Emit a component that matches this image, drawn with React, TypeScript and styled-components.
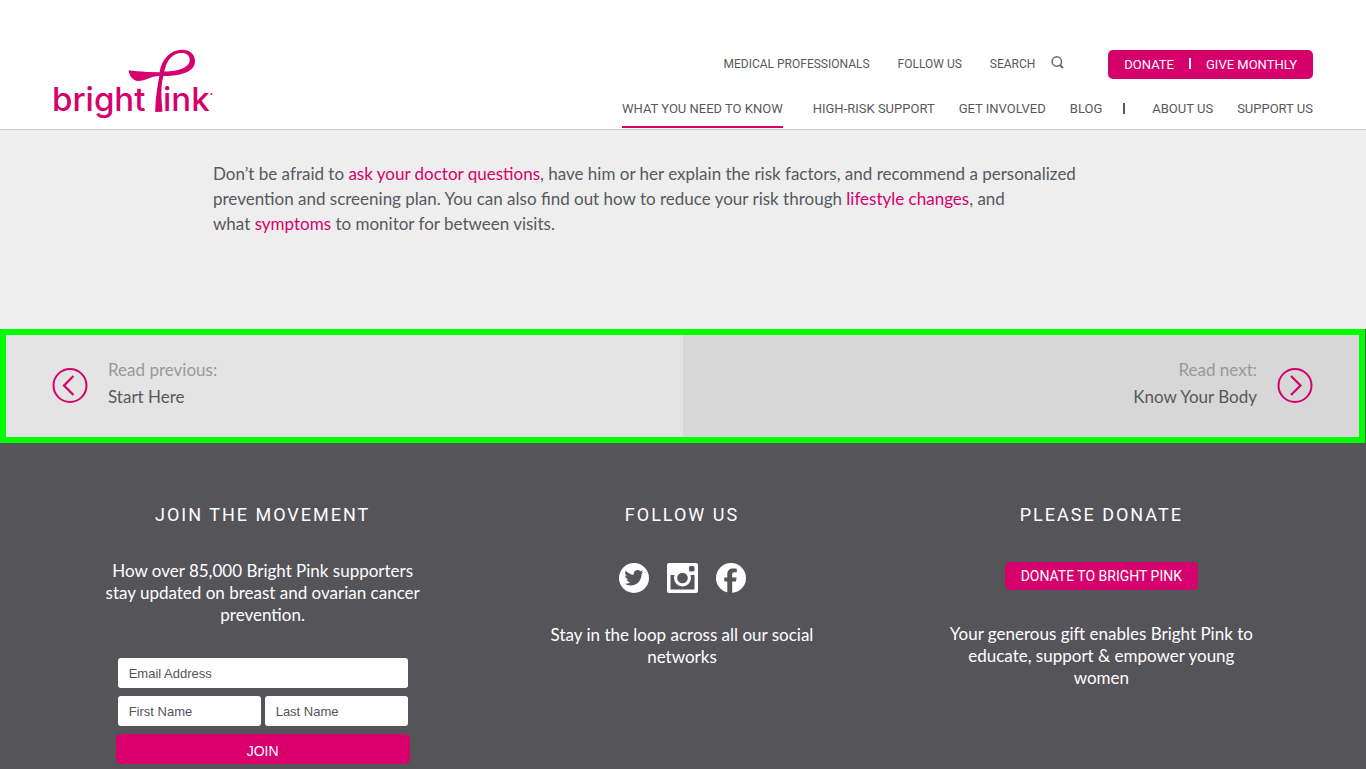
import React from "react";
import styled, { createGlobalStyle } from "styled-components";

const pink = "#d6006d";
const ink = "#58595b";
const sans = '"Lato", "Open Sans", sans-serif';
const caps = '"Roboto", "Lato", sans-serif';
const form = '"Liberation Sans", Arial, sans-serif';

const GlobalStyle = createGlobalStyle`
  *, *::before, *::after { box-sizing: border-box; }
  body { margin: 0; font-family: ${sans}; color: ${ink}; background: #555459; }
  a { color: inherit; text-decoration: none; }
  h2, p { margin: 0; }
`;

const Page = styled.div`
  min-height: 100vh;
  display: flex;
  flex-direction: column;
`;

const Header = styled.header`
  display: flex;
  justify-content: space-between;
  height: 130px;
  padding: 49px 53px 0 52px;
  background: #fff;
  border-bottom: 1px solid #ccc;
`;

const LogoLink = styled.a`
  display: block;
  svg { display: block; }
`;

const Navs = styled.div`
  display: flex;
  flex-direction: column;
  align-items: flex-end;
  justify-content: space-between;
  font-family: ${caps};
`;

const TopNav = styled.nav`
  display: flex;
  align-items: flex-start;
  gap: 28px;
  padding-top: 1px;
  font-size: 12px;
  line-height: 28px;
`;

const SearchLink = styled.a`
  display: flex;
  align-items: center;
  gap: 16px;
  margin-right: 16px;
  svg { margin-bottom: 4px; }
`;

const DonateGroup = styled.div`
  display: flex;
  align-items: center;
  gap: 15px;
  height: 29px;
  padding: 0 16px;
  border-radius: 5px;
  background: ${pink};
  color: #fff;
  font-size: 13px;
`;

const Bar = styled.span`
  width: 2px;
  height: 11px;
  margin-bottom: 2px;
  background: currentColor;
`;

const MainNav = styled.nav`
  display: flex;
  align-items: center;
  gap: 24px;
  font-size: 13px;
  line-height: 20px;
  ${Bar} { margin: 0 3px 1px -3px; }
`;

const MainLink = styled.a<{ $active?: boolean }>`
  padding: 10px 0 7px;
  border-bottom: 2px solid ${(p) => (p.$active ? pink : "transparent")};
  margin: 0 ${(p) => (p.$active ? "6px" : "0")} 1px 0;
`;

const Content = styled.main`
  padding: 31px 213px 93px;
  background: #eee;
  font-size: 17px;
  line-height: 25px;
`;

const Prose = styled.p`
  max-width: 884px;
`;

const PinkLink = styled.a`
  color: ${pink};
`;

const Pager = styled.nav`
  display: grid;
  grid-template-columns: 1fr 1fr;
  margin-right: 1px;
  border: 6px solid #0f0;
`;

const PagerLink = styled.a<{ $next?: boolean }>`
  display: flex;
  flex-direction: ${(p) => (p.$next ? "row-reverse" : "row")};
  align-items: center;
  gap: 20px;
  height: 102px;
  padding: 0 46px;
  background: ${(p) => (p.$next ? "#d7d7d7" : "#e4e4e4")};
  text-align: ${(p) => (p.$next ? "right" : "left")};
  font-size: 17px;
  line-height: 27px;
`;

const PagerText = styled.span`
  display: block;
  padding-bottom: 6px;
`;

const PagerHint = styled.span`
  display: block;
  color: #999;
`;

const Footer = styled.footer`
  flex: 1;
  display: grid;
  grid-template-columns: repeat(3, 1fr);
  padding: 60px 55px 5px 53px;
  background: #555459;
  color: #fff;
`;

const Column = styled.section`
  display: flex;
  flex-direction: column;
  align-items: center;
`;

const Title = styled.h2`
  font-family: ${caps};
  font-size: 18px;
  font-weight: 400;
  line-height: 24px;
  letter-spacing: 2px;
`;

const Blurb = styled.p`
  max-width: 324px;
  text-align: center;
  font-size: 17px;
  line-height: 22px;
`;

const JoinBlurb = styled(Blurb)`
  margin-top: 33px;
`;

const JoinForm = styled.form`
  display: grid;
  grid-template-columns: 1fr 1fr;
  gap: 8px 4px;
  width: 294px;
  margin-top: 32px;
  padding: 0 2px;
`;

const Field = styled.input<{ $wide?: boolean }>`
  grid-column: ${(p) => (p.$wide ? "1 / -1" : "auto")};
  min-width: 0;
  height: 30px;
  padding: 0 11px;
  border: 0;
  border-radius: 3px;
  background: #fff;
  font-family: ${form};
  font-size: 13px;
  color: ${ink};
  &::placeholder { color: #555; opacity: 1; }
`;

const JoinButton = styled.button`
  grid-column: 1 / -1;
  height: 30px;
  margin: 0 -2px;
  padding: 4px 0 0;
  border: 0;
  border-radius: 5px;
  background: #d9006d;
  color: #fff;
  font-family: ${form};
  font-size: 14px;
`;

const Social = styled.div`
  display: flex;
  gap: 18px;
  margin: 36px 0 31px;
  padding-left: 1px;
  svg { display: block; }
`;

const DonateLink = styled.a`
  margin: 35px 0 33px;
  padding: 0 16px;
  border-radius: 5px;
  background: ${pink};
  font-family: ${caps};
  font-size: 14px;
  line-height: 28px;
`;

const Logo = () => (
  <svg width="162" height="72" viewBox="0 0 162 72" fill={pink} aria-hidden="true">
    <g fontFamily="Inter, Lato, sans-serif" fontSize="33" fontWeight="500">
      <text x="0" y="62">bright</text>
      <text x="111" y="62">ink</text>
    </g>
    <circle cx="159.500" cy="45" r="1" />
    <path
      fillRule="evenodd"
      d="M76.7 21.300C82 22 88 22.700 95 22.900L107.500 23.300C110 9 119 0.700 130 0.700C138 0.700 143 5.500 143 12C143 22 132 26.600 111.500 27.100C108.500 36 109.300 50 110.500 62.800L103.200 63C103.300 50 105.300 38 107.300 27C99 27 93.500 32 86 32C80.500 32 76.700 25.500 76.700 21.300ZM112.300 22.600C127 22.200 137.700 18.500 137.700 10.700C137.700 6.500 134.500 4 129.500 4C121 4 114.500 11 112.300 22.600Z"
    />
  </svg>
);

const SearchIcon = () => (
  <svg width="13" height="13" viewBox="0 0 13 13" fill="none" stroke="#666" strokeWidth="1.500" aria-hidden="true">
    <circle cx="5.800" cy="5.500" r="4.700" />
    <path d="M9 9l3 3" strokeWidth="2" />
  </svg>
);

const Chevron = ({ next = false }: { next?: boolean }) => (
  <svg width="36" height="36" viewBox="0 0 36 36" fill="none" stroke={pink} strokeWidth="2" aria-hidden="true">
    <circle cx="18" cy="17.500" r="16.500" />
    <path d={next ? "M14 8l9.500 9.500-9.500 9.500" : "M21.500 8l-9.500 9.500 9.500 9.500"} strokeWidth="2.200" />
  </svg>
);

const TwitterIcon = () => (
  <svg width="30" height="30" viewBox="0 0 30 30" aria-hidden="true">
    <circle cx="15" cy="15" r="15" fill="#fff" />
    <path
      transform="translate(5.500 5.300) scale(.79)"
      fill="#555459"
      d="M23.950 4.570a10 10 0 0 1-2.820.770 4.960 4.960 0 0 0 2.160-2.720c-.950.550-2 .950-3.130 1.180a4.920 4.920 0 0 0-8.380 4.480C7.690 8.100 4.070 6.130 1.640 3.160a4.920 4.920 0 0 0 1.520 6.570 4.900 4.900 0 0 1-2.230-.610v.060c0 2.390 1.700 4.380 3.950 4.830a5 5 0 0 1-2.210.080 4.940 4.940 0 0 0 4.600 3.420A9.870 9.870 0 0 1 0 19.540a14 14 0 0 0 7.550 2.210c9.050 0 14-7.500 14-13.980 0-.210 0-.420-.020-.630a9.940 9.940 0 0 0 2.460-2.550z"
    />
  </svg>
);

const InstagramIcon = () => (
  <svg width="31" height="30" viewBox="0 0 31 30" aria-hidden="true">
    <rect width="31" height="30" rx="2" fill="#fff" />
    <path d="M3.500 12H27.500V26.500H3.500Z" fill="#555459" />
    <circle cx="15.500" cy="15" r="8.500" fill="#fff" />
    <circle cx="15.500" cy="15" r="5.300" fill="#555459" />
    <rect x="22" y="3" width="5.500" height="5.500" rx="1.500" fill="#555459" />
  </svg>
);

const FacebookIcon = () => (
  <svg width="30" height="30" viewBox="0 0 30 30" aria-hidden="true">
    <circle cx="15" cy="15" r="15" fill="#fff" />
    <path
      fill="#555459"
      d="M11.300 30V18.500H8.300v-4h3v-3.200c0-3.800 2.200-5.800 5.800-5.800 1.300 0 2.600.1 3.700.3v3.500h-2.300c-1.700 0-2.300.8-2.300 2.200v3h4.400l-.6 4h-3.800V30z"
    />
  </svg>
);

export default function App() {
  return (
    <Page>
      <GlobalStyle />
      <Header>
        <LogoLink href="#" aria-label="Bright Pink home">
          <Logo />
        </LogoLink>
        <Navs>
          <TopNav>
            <a href="#">MEDICAL PROFESSIONALS</a>
            <a href="#">FOLLOW US</a>
            <SearchLink href="#">
              SEARCH
              <SearchIcon />
            </SearchLink>
            <DonateGroup>
              <a href="#">DONATE</a>
              <Bar />
              <a href="#">GIVE MONTHLY</a>
            </DonateGroup>
          </TopNav>
          <MainNav>
            <MainLink href="#" $active>WHAT YOU NEED TO KNOW</MainLink>
            <MainLink href="#">HIGH-RISK SUPPORT</MainLink>
            <MainLink href="#">GET INVOLVED</MainLink>
            <MainLink href="#">BLOG</MainLink>
            <Bar />
            <MainLink href="#">ABOUT US</MainLink>
            <MainLink href="#">SUPPORT US</MainLink>
          </MainNav>
        </Navs>
      </Header>

      <Content>
        <Prose>
          Don’t be afraid to <PinkLink href="#">ask your doctor questions</PinkLink>, have him or her explain
          the risk factors, and recommend a personalized prevention and screening plan. You can also find out
          how to reduce your risk through <PinkLink href="#">lifestyle changes</PinkLink>, and
          what&nbsp;<PinkLink href="#">symptoms</PinkLink> to monitor for between visits.
        </Prose>
      </Content>

      <Pager aria-label="Articles">
        <PagerLink href="#">
          <Chevron />
          <PagerText>
            <PagerHint>Read previous:</PagerHint>
            Start Here
          </PagerText>
        </PagerLink>
        <PagerLink href="#" $next>
          <Chevron next />
          <PagerText>
            <PagerHint>Read next:</PagerHint>
            Know Your Body
          </PagerText>
        </PagerLink>
      </Pager>

      <Footer>
        <Column>
          <Title>JOIN THE MOVEMENT</Title>
          <JoinBlurb>
            How over 85,000 Bright Pink supporters stay updated on breast and ovarian cancer prevention.
          </JoinBlurb>
          <JoinForm>
            <Field $wide type="email" placeholder="Email Address" aria-label="Email Address" />
            <Field type="text" placeholder="First Name" aria-label="First Name" />
            <Field type="text" placeholder="Last Name" aria-label="Last Name" />
            <JoinButton type="button">JOIN</JoinButton>
          </JoinForm>
        </Column>
        <Column>
          <Title>FOLLOW US</Title>
          <Social>
            <a href="#" aria-label="Twitter"><TwitterIcon /></a>
            <a href="#" aria-label="Instagram"><InstagramIcon /></a>
            <a href="#" aria-label="Facebook"><FacebookIcon /></a>
          </Social>
          <Blurb>Stay in the loop across all our social networks</Blurb>
        </Column>
        <Column>
          <Title>PLEASE DONATE</Title>
          <DonateLink href="#">DONATE TO BRIGHT PINK</DonateLink>
          <Blurb>Your generous gift enables Bright Pink to educate, support &amp; empower young women</Blurb>
        </Column>
      </Footer>
    </Page>
  );
}
